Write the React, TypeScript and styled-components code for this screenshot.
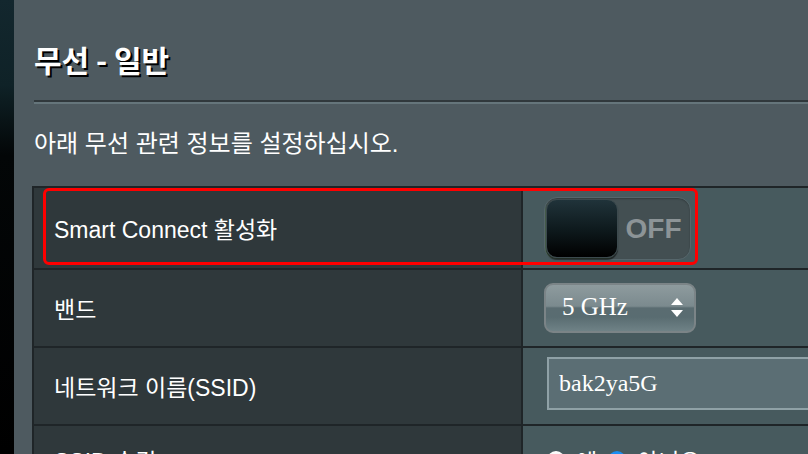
import React from "react";
import styled, { createGlobalStyle } from "styled-components";

const GlobalStyle = createGlobalStyle`
  html, body {
    margin: 0;
    padding: 0;
    width: 808px;
    height: 454px;
    overflow: hidden;
    background: #4e5a60;
  }
  body {
    font-family: "Liberation Sans", "Noto Sans CJK KR", sans-serif;
  }
  * { box-sizing: border-box; }
`;

const Page = styled.div`
  display: flex;
  width: 808px;
  height: 454px;
  overflow: hidden;
`;

const SideStrip = styled.div`
  flex: 0 0 14px;
  background: linear-gradient(
    to bottom,
    #13272e 0px,
    #0f2227 85px,
    #030607 155px,
    #000 100%
  );
`;

const Main = styled.main`
  flex: 1;
  min-width: 0;
  background: #4e5a60;
  padding: 41px 0 0 18px;
  overflow: hidden;
`;

const Title = styled.h1`
  margin: 0 0 0 2px;
  font: bold 30px/36px "Noto Sans CJK KR", sans-serif;
  color: #fff;
  text-shadow: 2px 2px 0 #000;
  white-space: nowrap;
`;

const Divider = styled.div`
  margin: 23px 0 0 2px;
  height: 4px;
  border-top: 2px solid #30383c;
  border-bottom: 2px solid #65757b;
  background: #4a565b;
`;

const Description = styled.p`
  margin: 24px 0 0 2px;
  font: 24px/32px "Liberation Sans", "Noto Sans CJK KR", sans-serif;
  color: #fff;
  white-space: nowrap;
`;

const Table = styled.div`
  position: relative;
  margin-top: 26px;
  width: 820px;
  display: grid;
  grid-template-columns: 487px 1fr;
  grid-template-rows: 80px 76px 76px 68px;
  gap: 2px;
  background: #1f2528;
  border: 2px solid #1f2528;
`;

const LabelCell = styled.div`
  display: flex;
  align-items: center;
  padding-left: 20px;
  background: #2f383b;
  color: #fff;
  font: 23px "Liberation Sans", "Noto Sans CJK KR", sans-serif;
  white-space: nowrap;
`;

const ValueCell = styled.div<{ $shift?: number }>`
  display: flex;
  align-items: center;
  padding-left: 21px;
  padding-bottom: ${(p) => p.$shift ?? 0}px;
  background: #475a5e;
  color: #fff;
`;

const Highlight = styled.div`
  position: absolute;
  left: 9px;
  top: 0;
  width: 655px;
  height: 77px;
  border: 3px solid #ff0000;
  border-radius: 6px;
  pointer-events: none;
`;

const Toggle = styled.div`
  width: 147px;
  height: 63px;
  border-radius: 13px;
  background: #434f52;
  border: 1px solid #56666b;
  display: flex;
  align-items: flex-start;
  padding: 1px 0 0 1px;
  box-shadow: inset 0 1px 2px rgba(0, 0, 0, 0.25);
`;

const Knob = styled.div`
  width: 72px;
  height: 59px;
  border-radius: 11px;
  background: linear-gradient(to bottom, #20333a 0%, #0d181b 55%, #000 100%);
  border: 1px solid #3c4a4e;
  box-shadow: 0 2px 1px rgba(0, 0, 0, 0.55), -1px 1px 0 rgba(90, 140, 80, 0.35);
`;

const ToggleText = styled.span`
  flex: 1;
  align-self: center;
  text-align: center;
  font: bold 28px "Liberation Sans", sans-serif;
  color: #8c9497;
  padding-right: 1px;
`;

const SelectBox = styled.div`
  position: relative;
  width: 152px;
  height: 50px;
  border: 2px solid #7b8487;
  border-radius: 9px;
  background: linear-gradient(
    to bottom,
    #8e9b9e 0%,
    #7b8a8e 46%,
    #5a6c71 50%,
    #596c71 70%,
    #6f8286 100%
  );
  display: flex;
  align-items: center;
  justify-content: space-between;
  padding: 0 11px 2px 16px;
  font: 25px "Liberation Serif", serif;
  color: #fff;
  overflow: hidden;
`;

const SelectArrows = styled.svg`
  flex: 0 0 auto;
`;

const TextInput = styled.input`
  width: 290px;
  height: 53px;
  margin-left: 3px;
  border: 2px solid #8fa1a6;
  background: #5b6e74;
  color: #fff;
  font: 24px "Liberation Serif", serif;
  padding: 0 10px;
  outline: none;
`;

const RadioGroup = styled.div`
  display: flex;
  align-items: center;
  margin-left: 3px;
`;

const RadioDot = styled.span<{ $checked?: boolean }>`
  width: 18px;
  height: 18px;
  border-radius: 50%;
  background: ${(p) =>
    p.$checked ? "#1a8df2" : "linear-gradient(to bottom, #ffffff, #d4d6d7)"};
  box-shadow: inset 0 -1px 1px rgba(0, 0, 0, 0.2);
`;

const RadioLabel = styled.span`
  margin: 0 11px 0 11px;
  font: 23px "Liberation Sans", "Noto Sans CJK KR", sans-serif;
  color: #fff;
`;

export default function App() {
  return (
    <>
      <GlobalStyle />
      <Page>
        <SideStrip />
        <Main>
          <Title>무선 - 일반</Title>
          <Divider />
          <Description>아래 무선 관련 정보를 설정하십시오.</Description>
          <Table>
            <LabelCell>Smart Connect 활성화</LabelCell>
            <ValueCell>
              <Toggle>
                <Knob />
                <ToggleText>OFF</ToggleText>
              </Toggle>
            </ValueCell>

            <LabelCell>밴드</LabelCell>
            <ValueCell>
              <SelectBox>
                <span>5 GHz</span>
                <SelectArrows width="12" height="19" viewBox="0 0 12 19">
                  <polygon points="6,0 12,7 0,7" fill="#fff" />
                  <polygon points="0,12 12,12 6,19" fill="#fff" />
                </SelectArrows>
              </SelectBox>
            </ValueCell>

            <LabelCell>네트워크 이름(SSID)</LabelCell>
            <ValueCell $shift={5}>
              <TextInput defaultValue="bak2ya5G" readOnly />
            </ValueCell>

            <LabelCell>SSID 숨김</LabelCell>
            <ValueCell>
              <RadioGroup>
                <RadioDot />
                <RadioLabel>예</RadioLabel>
                <RadioDot $checked />
                <RadioLabel>아니오</RadioLabel>
              </RadioGroup>
            </ValueCell>

            <Highlight />
          </Table>
        </Main>
      </Page>
    </>
  );
}
